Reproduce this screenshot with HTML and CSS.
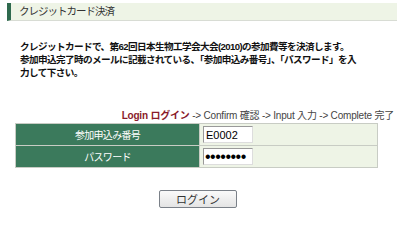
FILE: index.html
```html
<!DOCTYPE html>
<html lang="ja">
<head>
  <meta charset="UTF-8">
  <title>クレジットカード決済</title>
  <link rel="stylesheet" href="styles.css">
</head>
<body>

  <h1 class="title">クレジットカード決済</h1>

  <p class="lead">クレジットカードで、第62回日本生物工学会大会(2010)の参加費等を決済します。<br>参加申込完了時のメールに記載されている、「参加申込み番号」、「パスワード」を入力して下さい。</p>

  <div class="steps"><span class="current">Login ログイン</span> -&gt; Confirm 確認 -&gt; Input 入力 -&gt; Complete 完了</div>

  <form class="login">
    <table class="form-table">
      <tr>
        <th>参加申込み番号</th>
        <td><input type="text" class="field" value="E0002"></td>
      </tr>
      <tr>
        <th>パスワード</th>
        <td><input type="password" class="field pass" value="12345678"></td>
      </tr>
    </table>
    <div class="actions">
      <button type="button" class="btn">ログイン</button>
    </div>
  </form>

</body>
</html>
```

FILE: styles.css
```css
body {
  margin: 0;
  padding: 3px 3px 0 7px;
  background: #fff;
  color: #111;
  font-family: "Liberation Sans", "Noto Sans CJK JP", sans-serif;
  font-size: 11px;
}

.title {
  margin: 0;
  height: 17px;
  line-height: 17px;
  padding-left: 8px;
  border-left: 4px solid #2f6a4e;
  border-bottom: 1px solid #d8dcd4;
  background: #eef4e6;
  color: #333;
  font-size: 10.5px;
  font-weight: normal;
  letter-spacing: -1px;
}

.lead {
  margin: 19px 0 0 13px;
  width: 345px;
  line-height: 13px;
  font-size: 9.6px;
  font-weight: bold;
  letter-spacing: -0.6px;
}

.steps {
  margin: 30px 3px 0 0;
  text-align: right;
  color: #444;
  font-size: 10px;
  line-height: 14px;
  letter-spacing: -0.2px;
}

.steps .current {
  color: #8a1a2a;
  font-weight: bold;
}

.form-table {
  margin-left: 8px;
  width: 363px;
  border-collapse: collapse;
}

.form-table th {
  width: 183px;
  height: 21px;
  padding: 0;
  background: #3b7a5c;
  color: #fff;
  font-size: 10px;
  font-weight: normal;
  letter-spacing: -0.7px;
  border: 1px solid #c8ccc4;
}

.form-table td {
  padding: 0 0 0 3px;
  background: #eef4e6;
  border: 1px solid #c8ccc4;
}

.field {
  display: block;
  box-sizing: border-box;
  width: 50px;
  height: 17px;
  padding: 0 2px;
  border: 1px solid #999;
  border-right-color: #ddd;
  border-bottom-color: #ddd;
  font-family: "Liberation Sans", sans-serif;
  font-size: 11px;
  color: #000;
  background: #fff;
}

.pass {
  font-size: 16px;
  padding: 0 1px;
  letter-spacing: -0.5px;
}

.actions {
  margin-top: 22px;
  padding-left: 152px;
}

.btn {
  width: 78px;
  height: 18px;
  padding: 0;
  border: 1px solid #7a8088;
  border-radius: 2px;
  background: linear-gradient(#fafafa, #e4e4e4);
  color: #333;
  font-family: "Liberation Sans", "Noto Sans CJK JP", sans-serif;
  font-size: 11px;
}
```
